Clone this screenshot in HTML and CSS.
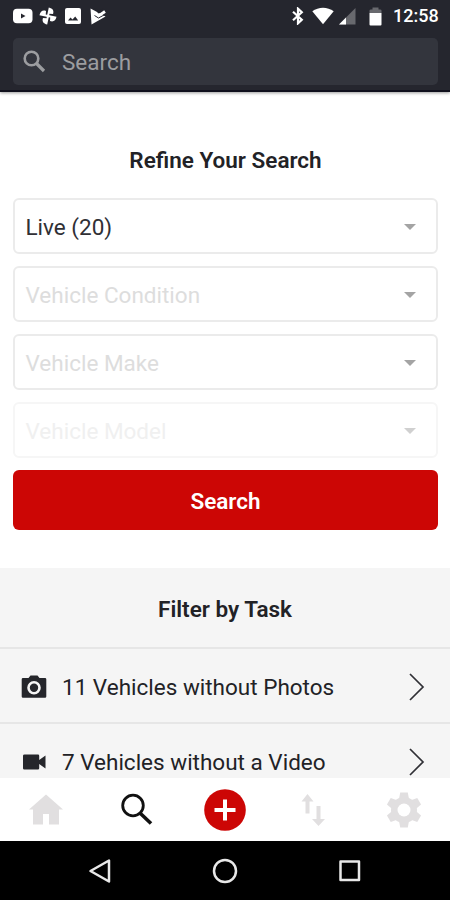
FILE: index.html
```
<!DOCTYPE html>
<html lang="en">

<head>
    <meta charset="utf-8">
    <meta name="viewport" content="width=device-width, initial-scale=1.0">
    <title>Refine Your Search</title>
    <link rel="stylesheet" href="styles.css">
</head>

<body>
    <header>
        <div class="status">
            <div class="status-left">
                <svg width="20" height="16" viewBox="0 0 20 16">
                    <rect x="0" y="0.8" width="19.5" height="14.4" rx="4" fill="#fff" />
                    <path d="M8 5.5l4.5 2.5L8 10.5z" fill="#25262e" />
                </svg>
                <svg class="pinwheel" width="18" height="18" viewBox="-9 -9 18 18" fill="#fff">
                    <g transform="rotate(12)">
                        <path id="blade" d="M-1 1V-8.5C3-8.5 5-6.5 4.5-3L1-2.5V1Z" />
                        <use href="#blade" transform="rotate(90)" />
                        <use href="#blade" transform="rotate(180)" />
                        <use href="#blade" transform="rotate(270)" />
                    </g>
                </svg>
                <svg width="16" height="16" viewBox="0 0 16 16">
                    <rect width="16" height="16" rx="2" fill="#fff" />
                    <path d="M3 12.5l2.5-3 2 2 2.700-3 3 4z" fill="#25262e" />
                </svg>
                <svg class="play-check" width="16" height="17" viewBox="0 0 16 17">
                    <path d="M0.500 0.500L15.500 8.500 1.500 16.500z" fill="#fff" />
                    <path d="M5.500 0l3 4.500L14 1" fill="none" stroke="#25262e" stroke-width="1.500" />
                    <path d="M5.500 5.500L8.500 8l6.500-4.500" fill="none" stroke="#fff" stroke-width="2.800" />
                    <path d="M4.500 7.500L8.500 10l6.500-3.500" fill="none" stroke="#25262e" stroke-width="1" />
                </svg>
            </div>
            <div class="status-right">
                <svg class="bluetooth" width="12" height="18" viewBox="0 0 12 18">
                    <path d="M1 4.800l8.800 7.900L6 16.300V1.700l3.800 3.600L1 13.200" fill="none" stroke="#fff" stroke-width="2.200" />
                </svg>
                <svg class="wifi" width="22" height="18" viewBox="0 0 22 18">
                    <path d="M11 17.300L0.300 4.300C6.500-0.600 15.500-0.600 21.700 4.300z" fill="#fff" />
                </svg>
                <svg class="signal" width="17" height="17" viewBox="0 0 17 17">
                    <path d="M0 16.500L16.500 0v16.500z" fill="#68696e" />
                    <path d="M0 16.500L7 9.500v7z" fill="#fff" />
                </svg>
                <svg class="battery" width="13" height="19" viewBox="0 0 13 19">
                    <path d="M0.500 6V3.500Q0.500 2.500 2 2.500H3.500V0.500h6v2H11q1.500 0 1.500 1V6z" fill="#68696e" />
                    <path d="M0.500 6h12v11.500q0 1-1 1h-10q-1 0-1-1z" fill="#fff" />
                </svg>
                <span class="time">12:58</span>
            </div>
        </div>
        <div class="search-field">
            <svg width="24" height="24" viewBox="0 0 24 24" fill="none" stroke="#9c9da0" stroke-width="2.600">
                <circle cx="8.500" cy="8.500" r="6.800" />
                <path d="M13.500 13.500l7.500 7.500" stroke-width="3.200" />
            </svg>
            <span>Search</span>
        </div>
    </header>

    <main>
        <section class="refine">
            <h2>Refine Your Search</h2>
            <div class="select chosen">Live (20)<i class="arrow"></i></div>
            <div class="select">Vehicle Condition<i class="arrow"></i></div>
            <div class="select">Vehicle Make<i class="arrow"></i></div>
            <div class="select disabled">Vehicle Model<i class="arrow"></i></div>
            <button>Search</button>
        </section>

        <section class="tasks">
            <h2>Filter by Task</h2>
            <div class="task">
                <svg class="task-icon" width="26" height="24" viewBox="0 0 26 24">
                    <path d="M2 3h5.500L9.500 0.500h7L18.500 3H24q1.300 0 1.300 1.300v17.200q0 1.300-1.300 1.300H2q-1.300 0-1.300-1.300V4.300Q0.700 3 2 3z" fill="#25262b" />
                    <circle cx="13" cy="12.700" r="5.500" fill="none" stroke="#f5f5f5" stroke-width="2.600" />
                </svg>
                <span>11 Vehicles without Photos</span>
                <svg class="chevron" width="16" height="28" viewBox="0 0 16 28">
                    <path d="M1 1l13 13L1 27" fill="none" stroke="#303035" stroke-width="1.700" />
                </svg>
            </div>
            <div class="task">
                <svg class="task-icon" width="26" height="24" viewBox="0 0 26 24">
                    <path d="M3.500 4.500h13.500q1.200 0 1.200 1.200v4.300L24.500 5.500v13l-6.300-4.500v4.300q0 1.200-1.200 1.200H3.200q-1.200 0-1.200-1.200V5.700q0-1.200 1.500-1.200z" fill="#25262b" />
                </svg>
                <span>7 Vehicles without a Video</span>
                <svg class="chevron" width="16" height="28" viewBox="0 0 16 28">
                    <path d="M1 1l13 13L1 27" fill="none" stroke="#303035" stroke-width="1.700" />
                </svg>
            </div>
        </section>
    </main>

    <nav class="tabs">
        <svg width="36" height="36" viewBox="0 0 36 36" fill="#e1dfe0">
            <path d="M18 2.500L35 17.500H31V32.500H21V22H15v10.500H5V17.500H1z" />
        </svg>
        <svg width="36" height="36" viewBox="0 0 36 36" fill="none" stroke="#111" stroke-width="2.800">
            <circle cx="14" cy="13.500" r="10.300" />
            <path d="M21.500 21.500l10.500 10" stroke-width="3.600" />
        </svg>
        <svg width="42" height="42" viewBox="0 0 42 42">
            <circle cx="21" cy="21" r="20.800" fill="#cc0605" />
            <path d="M21 10.500v21M10.500 21h21" stroke="#fff" stroke-width="4" />
        </svg>
        <svg width="36" height="36" viewBox="0 0 36 36" fill="#e1dfe0">
            <path d="M12.500 2l6 7.500h-4v12h-4v-12h-4z" />
            <path d="M23.500 34l-6.500-7h4.500V14h4v13H30z" />
        </svg>
        <svg width="36" height="36" viewBox="-18 -18 36 36" fill="#e1dfe0">
            <path id="tooth" d="M-5-11L-3.800-17.500H3.800L5-11V11L3.800 17.500H-3.800L-5 11z" />
            <use href="#tooth" transform="rotate(60)" />
            <use href="#tooth" transform="rotate(120)" />
            <circle r="13" />
            <circle r="6.500" fill="#fff" />
        </svg>
    </nav>

    <footer>
        <svg width="26" height="26" viewBox="0 0 26 26">
            <path d="M22 2.500v21L3.500 13z" />
        </svg>
        <svg width="26" height="26" viewBox="0 0 26 26">
            <circle cx="13" cy="13" r="11" />
        </svg>
        <svg width="26" height="26" viewBox="0 0 26 26">
            <rect x="3.500" y="3.500" width="18.500" height="18.500" />
        </svg>
    </footer>
</body>

</html>
```
FILE: styles.css
```
* {
    box-sizing: border-box;
}

body {
    margin: 0;
    height: 900px;
    display: flex;
    flex-direction: column;
    overflow: hidden;
    background-color: #fff;
    color: #222226;
    font-family: Roboto, sans-serif;
    font-size: 22.5px;
}

svg {
    display: block;
    flex: none;
}

header {
    height: 92px;
    flex: none;
    padding: 0 12px;
    background-color: #25262e;
    border-bottom: 2px solid #10101d;
    box-shadow: 0 1px 3px rgba(0, 0, 0, 0.4);
}

.status {
    height: 38px;
    padding-bottom: 6px;
    display: flex;
    justify-content: space-between;
    align-items: center;
}

.status-left,
.status-right {
    display: flex;
    align-items: center;
}

.status-left {
    padding-left: 1px;
}

.pinwheel {
    margin: 0 8px 0 6px;
}

.play-check {
    margin-left: 9px;
}

.wifi {
    margin-left: 8px;
}

.signal {
    margin-left: 5px;
}

.battery {
    margin: 0 11px 0 13px;
}

.time {
    width: 45px;
    color: #fff;
    font-size: 18px;
    font-weight: 500;
    line-height: 32px;
}

.search-field {
    height: 47px;
    margin-left: 1px;
    padding-left: 10px;
    display: flex;
    align-items: center;
    gap: 15px;
    border-radius: 5px;
    background-color: #33353d;
    color: #9c9da0;
}

main {
    flex: 1;
    min-height: 0;
    overflow: hidden;
}

h2 {
    margin: 0;
    font-size: 22.5px;
    font-weight: 600;
    line-height: 28px;
    text-align: center;
}

.refine {
    height: 476px;
    padding: 54px 12px 0 13px;
}

.refine h2 {
    margin-bottom: 24px;
}

.select {
    height: 56px;
    margin-bottom: 12px;
    padding: 1px 20px 0 10.5px;
    display: flex;
    align-items: center;
    justify-content: space-between;
    border: 2px solid #ebebeb;
    border-radius: 6px;
    color: #dddddd;
}

.chosen {
    color: #303035;
}

.disabled {
    border-color: #f6f6f6;
    color: #f0f0f0;
}

.arrow {
    border: 6px solid transparent;
    border-top-color: #a4a4a4;
    border-bottom: 0;
}

.disabled .arrow {
    border-top-color: #d0d0d0;
}

button {
    width: 100%;
    height: 60px;
    padding-top: 2px;
    border: none;
    border-radius: 6px;
    background-color: #cc0605;
    color: #fff;
    font-family: inherit;
    font-size: 22.5px;
    font-weight: 600;
}

.tasks {
    background-color: #f5f5f5;
}

.tasks h2 {
    height: 79px;
    line-height: 83px;
}

.task {
    height: 75px;
    padding: 2px 25px 0 21px;
    display: flex;
    align-items: center;
    border-top: 2px solid #e6e6e6;
}

.task-icon {
    margin-right: 15px;
}

.chevron {
    margin-left: auto;
}

.tabs {
    height: 63px;
    flex: none;
    padding: 0 28px;
    display: grid;
    grid-template-columns: 91px 85px 91px 91px 36px;
    align-items: center;
    background-color: #fff;
}

footer {
    height: 59px;
    flex: none;
    padding: 0 87px;
    display: flex;
    align-items: center;
    justify-content: space-between;
    background-color: #000;
}

footer svg {
    fill: none;
    stroke: #e8e8e8;
    stroke-width: 2.5;
    stroke-linejoin: round;
}
```
